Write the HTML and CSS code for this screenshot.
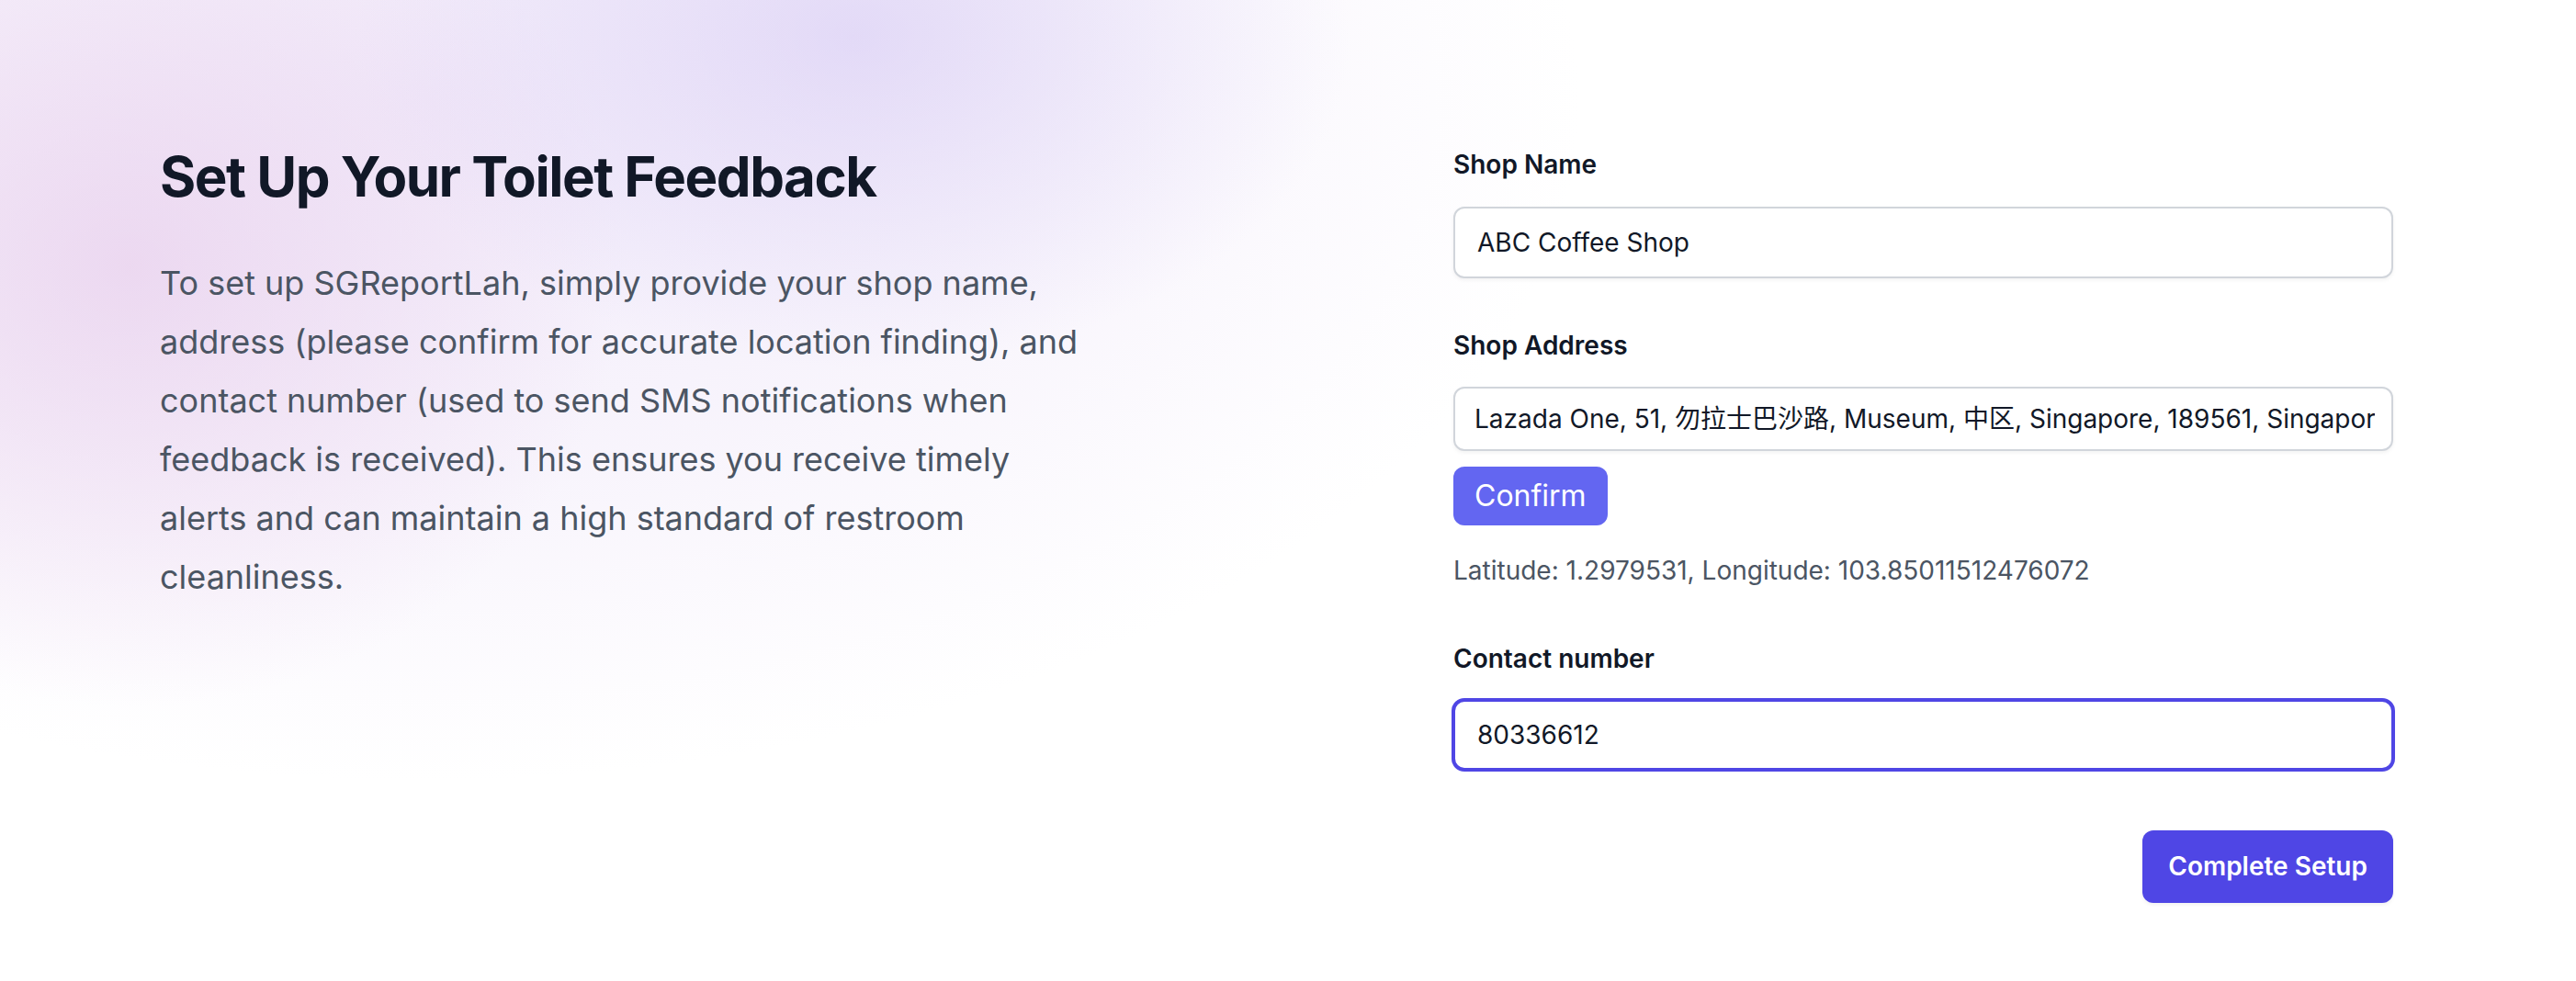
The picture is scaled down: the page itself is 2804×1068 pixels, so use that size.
FILE: index.html
```html
<!DOCTYPE html>
<html lang="en">
<head>
<meta charset="utf-8">
<title>Set Up Your Toilet Feedback</title>
<link rel="stylesheet" href="styles.css">
</head>
<body>
<main class="page">
  <section class="intro">
    <h1 class="title">Set Up Your Toilet Feedback</h1>
    <p class="lead">To set up SGReportLah, simply provide your shop name, address (please confirm for accurate location finding), and contact number (used to send SMS notifications when feedback is received). This ensures you receive timely alerts and can maintain a high standard of restroom cleanliness.</p>
  </section>
  <form class="form">
    <label class="label" for="shop-name">Shop Name</label>
    <input class="input input-name" id="shop-name" type="text" value="ABC Coffee Shop">

    <label class="label label-address" for="shop-address">Shop Address</label>
    <input class="input input-address" id="shop-address" type="text" value="Lazada One, 51, 勿拉士巴沙路, Museum, 中区, Singapore, 189561, Singapore">
    <div class="confirm-row"><button type="button" class="btn-confirm">Confirm</button></div>
    <p class="coords">Latitude: 1.2979531, Longitude: 103.85011512476072</p>

    <label class="label label-contact" for="contact">Contact number</label>
    <input class="input input-contact" id="contact" type="text" value="80336612">

    <div class="actions"><button type="button" class="btn-submit">Complete Setup</button></div>
  </form>
</main>
</body>
</html>
```
FILE: styles.css
```css
* { box-sizing: border-box; }
html, body { margin: 0; padding: 0; }
body {
  font-family: Inter, "Noto Sans", "Noto Sans CJK SC", sans-serif;
  background: #ffffff;
  color: #111827;
}
.page {
  min-height: 1068px;
  display: grid;
  grid-template-columns: 1010px 1023px;
  column-gap: 398px;
  align-items: start;
  padding: 156px 0 0 174px;
  background:
    radial-gradient(ellipse 540px 360px at 930px 40px, rgba(214, 202, 244, 0.6) 0%, rgba(214, 202, 244, 0) 100%),
    radial-gradient(ellipse 540px 480px at 140px 290px, rgba(232, 206, 236, 0.7) 0%, rgba(232, 206, 236, 0) 100%),
    radial-gradient(ellipse 1260px 740px at 460px 110px, rgba(241, 234, 250, 0.95) 0%, rgba(245, 240, 251, 0.7) 55%, rgba(255, 255, 255, 0) 100%),
    #ffffff;
}
.title {
  margin: 0;
  font-size: 60px;
  line-height: 72px;
  font-weight: 700;
  letter-spacing: -1.5px;
  color: #111827;
}
.lead {
  margin: 48px 0 0;
  font-size: 36px;
  line-height: 64px;
  color: #4b5563;
}
.form {
  display: flex;
  flex-direction: column;
  padding-top: 3px;
}
.label {
  display: block;
  font-size: 28px;
  line-height: 40px;
  font-weight: 600;
  color: #111827;
}
.label-address { margin-top: 53px; }
.label-contact { margin-top: 56px; }
.input {
  display: block;
  width: 100%;
  margin-top: 26px;
  font-family: Inter, "Noto Sans CJK SC", sans-serif;
  font-size: 28px;
  line-height: 40px;
  color: #111827;
  background: #ffffff;
  border: 2px solid #d1d5db;
  border-radius: 12px;
  box-shadow: 0 2px 4px rgba(0, 0, 0, 0.05);
  outline: none;
}
.input-name { padding: 17px 24px; }
.input-address { margin-top: 25px; padding: 13px 18px 13px 21px; }
.input-contact {
  margin-top: 25px;
  padding: 16px 24px;
  border-color: #4f46e5;
  box-shadow: 0 0 0 2px #4f46e5;
}
.confirm-row { margin-top: 17px; display: flex; }
.btn-confirm {
  font-family: Inter, sans-serif;
  font-size: 32px;
  line-height: 48px;
  font-weight: 400;
  color: #ffffff;
  background: #6366f1;
  border: none;
  border-radius: 12px;
  padding: 8px 23px;
}
.coords {
  margin: 29px 0 0;
  font-size: 28px;
  line-height: 40px;
  color: #4b5563;
}
.actions {
  margin-top: 66px;
  display: flex;
  justify-content: flex-end;
}
.btn-submit {
  font-family: Inter, sans-serif;
  font-size: 28px;
  line-height: 40px;
  font-weight: 600;
  color: #ffffff;
  background: #4f46e5;
  border: none;
  border-radius: 12px;
  padding: 19px 28px 20px;
  box-shadow: 0 2px 4px rgba(0, 0, 0, 0.06);
}
```
